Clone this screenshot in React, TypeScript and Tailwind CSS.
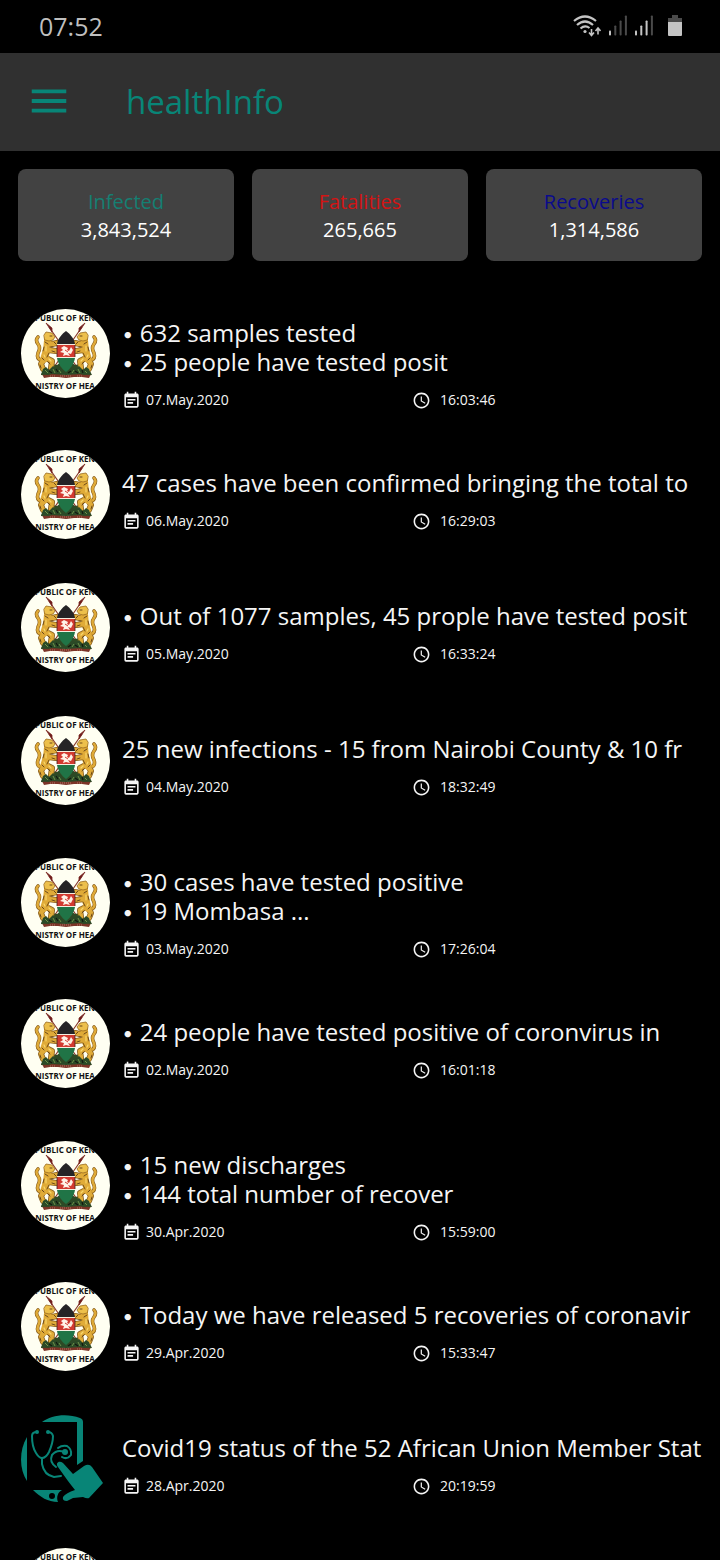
import { MdAccessTime, MdEventNote, MdMenu } from "react-icons/md";

type NewsItem = {
  lines: string[];
  bulleted?: boolean;
  date: string;
  time: string;
  source: "ministry" | "app";
};

const stats = [
  { label: "Infected", value: "3,843,524", color: "text-[#157f72]" },
  { label: "Fatalities", value: "265,665", color: "text-[#d31414]" },
  { label: "Recoveries", value: "1,314,586", color: "text-[#0a0a8c]" },
];

const news: NewsItem[] = [
  { lines: ["632 samples tested", "25 people have tested posit"], bulleted: true, date: "07.May.2020", time: "16:03:46", source: "ministry" },
  { lines: ["47 cases have been confirmed bringing the total to"], date: "06.May.2020", time: "16:29:03", source: "ministry" },
  { lines: ["Out of 1077 samples, 45 prople have tested posit"], bulleted: true, date: "05.May.2020", time: "16:33:24", source: "ministry" },
  { lines: ["25 new infections - 15 from Nairobi County & 10 fr"], date: "04.May.2020", time: "18:32:49", source: "ministry" },
  { lines: ["30 cases have tested positive", "19 Mombasa ..."], bulleted: true, date: "03.May.2020", time: "17:26:04", source: "ministry" },
  { lines: ["24 people have tested positive of coronvirus in"], bulleted: true, date: "02.May.2020", time: "16:01:18", source: "ministry" },
  { lines: ["15 new discharges", "144 total number of recover"], bulleted: true, date: "30.Apr.2020", time: "15:59:00", source: "ministry" },
  { lines: ["Today we have released 5 recoveries of coronavir"], bulleted: true, date: "29.Apr.2020", time: "15:33:47", source: "ministry" },
  { lines: ["Covid19 status of the 52 African Union Member Stat"], date: "28.Apr.2020", time: "20:19:59", source: "app" },
];

function Lion() {
  return (
    <g strokeLinecap="round" strokeLinejoin="round" fill="none">
      {/* tail */}
      <path d="M21 52 Q15 50 17 44 Q20 39 17 35 Q14 31 17 28" stroke="#8a5f1d" strokeWidth="3.600" />
      <path d="M21 52 Q15 50 17 44 Q20 39 17 35 Q14 31 17 28" stroke="#e0ab38" strokeWidth="2.400" />
      {/* body and legs */}
      <path d="M27 29 L26 40 L23 50 M26 36 L36 34 M27 41 L35 42 M23 50 L20 55 L22 60 M25 49 L31 52 L30 59" stroke="#8a5f1d" strokeWidth="6" />
      <path d="M27 29 L26 40 L23 50" stroke="#e0ab38" strokeWidth="7.600" />
      <path d="M26 36 L36 34 M27 41 L35 42 M23 50 L20 55 L22 60 M25 49 L31 52 L30 59" stroke="#e0ab38" strokeWidth="4.400" />
      <path d="M23 26 L25 23 L31 24 L34 28 L32 31 L28 32 L24 31 Z" fill="#edc04b" stroke="#9a6b20" strokeWidth="0.800" />
      <path d="M29 27 L31 27 M24 33 L27 35 M29 38 L32 38 M23 38 L22 42 M28 44 L26 48 M21 49 L23 51 M27 53 L29 55 M19 56 L20 59 M33 33 L35 35 M31 42 L34 43" stroke="#6b481a" strokeWidth="1" />
      <path d="M25 37 L25 42 M23 46 L24 48 M28 50 L30 52" stroke="#f8d76c" strokeWidth="1.200" />
    </g>
  );
}

function MinistryLogo() {
  return (
    <svg viewBox="0 0 89 89" className="size-full" role="img" aria-label="Ministry of Health">
      <rect width="89" height="89" fill="#fffff2" />
      <g fontFamily="'Open Sans', sans-serif" fontWeight="700" fontSize="8" textAnchor="middle" fill="#111111">
        <text x="44" y="12">PUBLIC OF KEN</text>
        <text x="44" y="80">NISTRY OF HEA</text>
      </g>
      <path d="M28 18 L58 61 M61 18 L31 61" stroke="#8a3b2c" strokeWidth="1.200" />
      <path d="M25 14 L31 19 L31 23 Z M64 14 L58 19 L58 23 Z" fill="#6d1c1c" stroke="#7d2a25" strokeWidth="0.800" />
      {/* hill */}
      <path d="M20 66 L22 60 L27 60 L31 55 L36 56 L40 53 L50 53 L54 56 L59 55 L63 60 L68 60 L71 66 L60 67 L45 65 L31 67 Z" fill="#2e4a25" />
      <path d="M21 65 L27 66 L35 64 L45 66 L55 64 L63 66 L70 65 L68 69 L61 68 L53 68 L45 69 L37 68 L29 68 L23 69 Z" fill="#7c3427" />
      <path d="M29 67 h5 M39 67 h12 M56 67 h5" stroke="#c89a84" strokeWidth="0.700" strokeDasharray="1 1" />
      <Lion />
      <g transform="translate(90 0) scale(-1 1)">
        <Lion />
      </g>
      {/* shield */}
      <path d="M45 22 C41 25 36 30 36 36 L54 36 C54 30 49 25 45 22 Z" fill="#252426" />
      <path d="M36 36 H54 V48 H36 Z" fill="#d23a30" />
      <path d="M36 49 H54 C53 55 49 60 45 63 C41 60 37 55 36 49 Z" fill="#207446" />
      <path d="M36 35.500 H54 M36 48.500 H54" stroke="#f4efe0" strokeWidth="1" />
      <path d="M43 37 L47 39 L46 41 L48 42 L50 38 L52 41 L50 45 L47 44 L49 47 L45 46 L42 47 L43 44 L39 43 L42 41 L40 39 Z" fill="#fff3e8" />
      <path d="M44 41 L47 43" stroke="#d23a30" strokeWidth="1" />
      <path d="M36 36 V48 M54 36 V48" stroke="#40201c" strokeWidth="0.800" />
      {/* grass in front of the feet */}
      <path d="M20 66 L22 60 L25 58 L28 61 L32 57 L36 60 L39 58 L42 63 L48 63 L51 58 L54 60 L58 57 L62 61 L65 58 L68 60 L70 66 L60 65 L45 66 L30 65 Z" fill="#2b4a27" />
      <path d="M24 61 L27 64 M32 60 L34 64 M38 61 L40 64 M51 64 L53 61 M57 60 L59 64 M64 62 L66 64" stroke="#6f914b" strokeWidth="1" />
      <path d="M28 62 L31 64 M35 60 L37 63 M47 64 L50 62 M54 62 L57 64 M61 61 L62 64" stroke="#11180f" strokeWidth="1.200" />
    </svg>
  );
}

function AppLogo() {
  return (
    <svg viewBox="0 0 89 89" className="size-full" fill="#088577" role="img" aria-label="healthInfo">
      <path d="M21 7 C30 0 46 -2 59 3 Q62 4 62 7 V46 L56 50 V7 Z" />
      <path d="M6 22 V66 C-2 54 -2 35 6 22 Z" />
      <path fillRule="evenodd" d="M12 75 H41 C37 77 35 82 37 87 C27 87 19 82 12 75 Z M31 78 a3 3 0 1 0 0 6 a3 3 0 1 0 0 -6 Z" />
      <path d="M37 52 C34 48 38 45 42 48 L52 59 L63 51 Q68 48 71 52 L82 68 L68 83 Q66 84 62 82 L52 83 L46 86 Q41 86 42 82 Q45 78 54 75 Q50 70 47 66 Z" />
      <g fill="none" stroke="#088577" strokeWidth="2" strokeLinecap="round">
        <path d="M16 17 Q11 17 11 21 Q11 32 15 38 Q18 43 21 43 Q25 43 28 37 Q32 28 32 21 Q31 17 27 17" />
        <path d="M21 43 V49 Q23 60 33 62 L40 61" />
        <path d="M35 52 Q28 47 31 40 Q36 34 43 37" />
        <path d="M37 33 Q41 30 46 31 Q51 34 50 40 Q46 45 41 42" />
      </g>
      <circle cx="16" cy="17" r="2" />
      <circle cx="27" cy="17" r="2" />
      <circle cx="44" cy="37" r="3" />
    </svg>
  );
}

function SignalBars({ level }: { level: number }) {
  return (
    <svg viewBox="0 0 18 21" className="h-[21px] w-[18px]" aria-hidden="true">
      {[5, 10, 15, 20].map((h, i) => (
        <rect key={h} x={i * 5 + i * 0.3} y={20.5 - h} width="2" height={h} rx="0.8" fill={i < level ? "#c4c4c4" : "#4a4a4a"} />
      ))}
    </svg>
  );
}

function StatusBar() {
  return (
    <div className="flex h-[53px] shrink-0 items-center justify-between pr-[38px] pb-[2px] pl-[39px] text-[#bfbfbf]">
      <span className="text-[25px] leading-8">07:52</span>
      <div className="flex items-center">
        <svg viewBox="0 0 28 22" className="mr-[8px] h-[22px] w-[28px]" fill="none" stroke="#c4c4c4" strokeWidth="2.2" aria-hidden="true">
          <path d="M1 6 Q12 -3 23 6" />
          <path d="M4 10 Q12 3 20 10" />
          <path d="M7.500 13.500 Q12 9.500 16.500 13" />
          <circle cx="12" cy="16.500" r="1.600" fill="#c4c4c4" stroke="none" />
          <path d="M18.500 14 V20 M16 17.500 L18.500 20.500 L21 17.500 M25 19.500 V13.500 M22.500 16 L25 13 L27.500 16" strokeWidth="1.600" />
        </svg>
        <SignalBars level={1} />
        <div className="w-2" />
        <SignalBars level={3} />
        <svg viewBox="0 0 14 22" className="ml-[15px] h-[22px] w-[14px]" aria-hidden="true">
          <path d="M4 0 H10 V3 H14 V8 H0 V3 H4 Z" fill="#4a4a4a" />
          <path d="M0 7 H14 V20 Q14 21 13 21 H1 Q0 21 0 20 Z" fill="#c4c4c4" />
        </svg>
      </div>
    </div>
  );
}

function NewsRow({ item }: { item: NewsItem }) {
  return (
    <li className="flex shrink-0 items-start pr-[18px] pl-[21px]">
      <div className={item.source === "ministry" ? "my-[22px] size-[89px] shrink-0 self-center overflow-hidden rounded-full" : "my-[22px] size-[89px] shrink-0 self-center"}>
        {item.source === "ministry" ? <MinistryLogo /> : <AppLogo />}
      </div>
      <div className="ml-3 min-w-0 flex-1 pt-10 pb-[18px]">
        <h2 className="text-[24px] leading-[29px] whitespace-nowrap">
          {item.lines.map((line) => (
            <span key={line} className="block">
              {item.bulleted && <span className="font-['DejaVu_Sans',sans-serif] text-[18px] leading-5 font-bold">•</span>}
              {item.bulleted && " "}
              {line}
            </span>
          ))}
        </h2>
        <div className="mt-[14px] grid grid-cols-2 text-[14px] leading-5">
          <span className="flex items-center gap-[5px]">
            <MdEventNote className="size-[19px]" aria-hidden="true" />
            {item.date}
          </span>
          <span className="flex items-center gap-[9px]">
            <MdAccessTime className="size-[19px]" aria-hidden="true" />
            {item.time}
          </span>
        </div>
      </div>
    </li>
  );
}

export default function App() {
  return (
    <div className="flex h-screen flex-col overflow-hidden bg-black font-['Open_Sans',sans-serif] text-[#f5f5f5]">
      <StatusBar />
      <header className="flex h-[98px] shrink-0 items-center bg-[#303030] pb-[2px] pl-[26px] text-[#088577]">
        <button type="button" aria-label="Open menu">
          <MdMenu className="size-[46px]" />
        </button>
        <h1 className="ml-[54px] pt-[2px] text-[33px] leading-10">healthInfo</h1>
      </header>

      <section className="grid shrink-0 grid-cols-3 gap-[18px] p-[18px] pb-[17px]">
        {stats.map((stat) => (
          <div key={stat.label} className="rounded-lg bg-[#424242] pt-[19px] pb-[17px] text-center text-[20px] leading-7">
            <p className={stat.color}>{stat.label}</p>
            <p className="text-white">{stat.value}</p>
          </div>
        ))}
      </section>

      <ul className="flex flex-col">
        {news.map((item) => (
          <NewsRow key={item.date} item={item} />
        ))}
        {/* next row, still below the fold */}
        <li className="shrink-0 py-[22px] pl-[21px]">
          <div className="size-[89px] overflow-hidden rounded-full">
            <MinistryLogo />
          </div>
        </li>
      </ul>
    </div>
  );
}
